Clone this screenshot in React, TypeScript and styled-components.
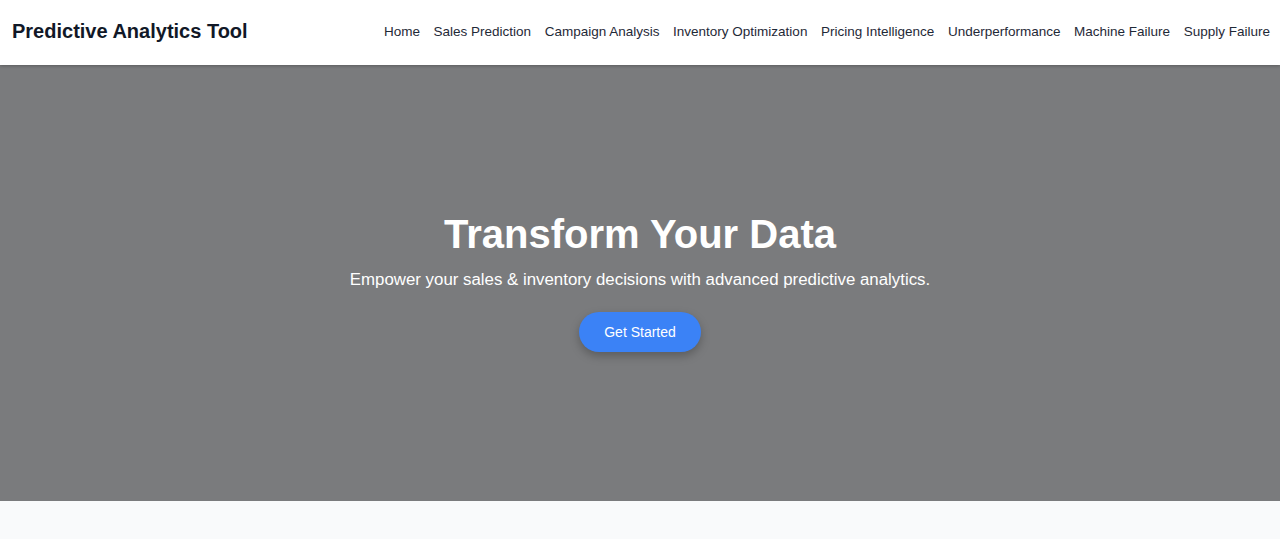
import styled, { createGlobalStyle } from "styled-components";

const GlobalStyle = createGlobalStyle`
  html, body {
    margin: 0;
    padding: 0;
  }
  body {
    font-family: "Liberation Sans", Arial, sans-serif;
    background: #f9fafb;
  }
`;

const navLinks = [
  "Home",
  "Sales Prediction",
  "Campaign Analysis",
  "Inventory Optimization",
  "Pricing Intelligence",
  "Underperformance",
  "Machine Failure",
  "Supply Failure",
];

const Page = styled.div`
  min-height: 539px;
  background: #f9fafb;
`;

const Header = styled.header`
  position: relative;
  z-index: 2;
  height: 65px;
  box-sizing: border-box;
  display: flex;
  align-items: center;
  justify-content: space-between;
  padding: 0 10px 2px 12px;
  background: #ffffff;
  box-shadow: 0 1px 3px rgba(0, 0, 0, 0.25);
`;

const Brand = styled.h1`
  margin: 0;
  font-size: 20px;
  font-weight: 700;
  color: #111827;
`;

const Nav = styled.nav`
  display: flex;
  gap: 13.6px;
`;

const NavLink = styled.a`
  font-size: 13.5px;
  color: #1f2937;
  text-decoration: none;
  cursor: pointer;
`;

const Hero = styled.section`
  height: 436px;
  display: flex;
  flex-direction: column;
  align-items: center;
  justify-content: center;
  background: #7a7b7d;
  color: #ffffff;
  text-align: center;
`;

const Title = styled.h2`
  margin: 0;
  font-size: 40px;
  font-weight: 700;
  line-height: 1;
`;

const Subtitle = styled.p`
  margin: 13px 0 0;
  font-size: 16.85px;
  line-height: 1.5;
`;

const CtaButton = styled.button`
  margin-top: 20px;
  height: 40px;
  padding: 0 25px;
  border: none;
  border-radius: 20px;
  background: #3b82f6;
  color: #ffffff;
  font-family: inherit;
  font-size: 14px;
  cursor: pointer;
  box-shadow: 0 4px 10px rgba(0, 0, 0, 0.25);
`;

export default function App() {
  return (
    <Page>
      <GlobalStyle />
      <Header>
        <Brand>Predictive Analytics Tool</Brand>
        <Nav>
          {navLinks.map((link) => (
            <NavLink key={link}>{link}</NavLink>
          ))}
        </Nav>
      </Header>
      <Hero>
        <Title>Transform Your Data</Title>
        <Subtitle>
          Empower your sales &amp; inventory decisions with advanced predictive
          analytics.
        </Subtitle>
        <CtaButton>Get Started</CtaButton>
      </Hero>
    </Page>
  );
}
